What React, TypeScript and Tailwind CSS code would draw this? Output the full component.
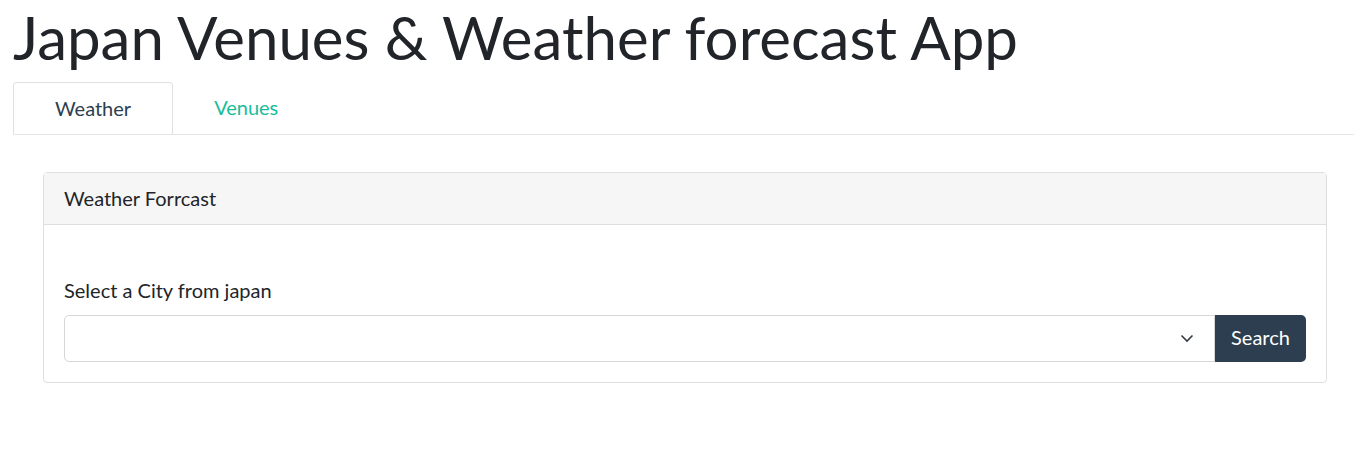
import React from 'react';

const font = { fontFamily: 'Lato, "Open Sans", sans-serif' };

const App: React.FC = () => {
  return (
    <div className="min-h-[458px] bg-white text-[#212529]" style={font}>
      <div className="pl-[13px]">
        {/* Title */}
        <h1 className="text-[60px] leading-[74px] font-normal mb-[8px]">
          Japan Venues &amp; Weather forecast App
        </h1>

        {/* Tabs */}
        <div className="flex border-b border-[#e6e6e6]">
          <div className="h-[52px] px-[41px] pb-[2px] flex items-center border border-b-0 border-[#e0e0e0] rounded-t-[4px] bg-white -mb-px text-[20px] text-[#2c3e50]">
            Weather
          </div>
          <div className="h-[52px] px-[41px] pb-[2px] flex items-center text-[20px] text-[#18bc9c]">
            Venues
          </div>
        </div>

        {/* Card */}
        <div className="mt-[37px] ml-[30px] mr-[27px] border border-[#dfdfdf] rounded-[4px]">
          <div className="h-[52px] px-[20px] pb-[2px] flex items-center bg-[#f6f6f6] border-b border-[#dfdfdf] text-[20px]">
            Weather Forrcast
          </div>
          <div className="px-[20px] pt-[53px] pb-[20px]">
            <div className="text-[20px] leading-[24px] mb-[13px]">Select a City from japan</div>
            <div className="flex">
              <div className="flex-1 h-[47px] border border-[#d6d6d6] rounded-l-[5px] flex items-center justify-end pr-[20px]">
                <svg width="14" height="9" viewBox="0 0 14 9" fill="none">
                  <path d="M1.5 1.5 L7 7 L12.5 1.5" stroke="#343a40" strokeWidth="1.6" />
                </svg>
              </div>
              <button className="h-[47px] w-[91px] pb-[3px] bg-[#2c3e50] text-white text-[20px] rounded-r-[5px]">
                Search
              </button>
            </div>
          </div>
        </div>
      </div>
    </div>
  );
};

export default App;
